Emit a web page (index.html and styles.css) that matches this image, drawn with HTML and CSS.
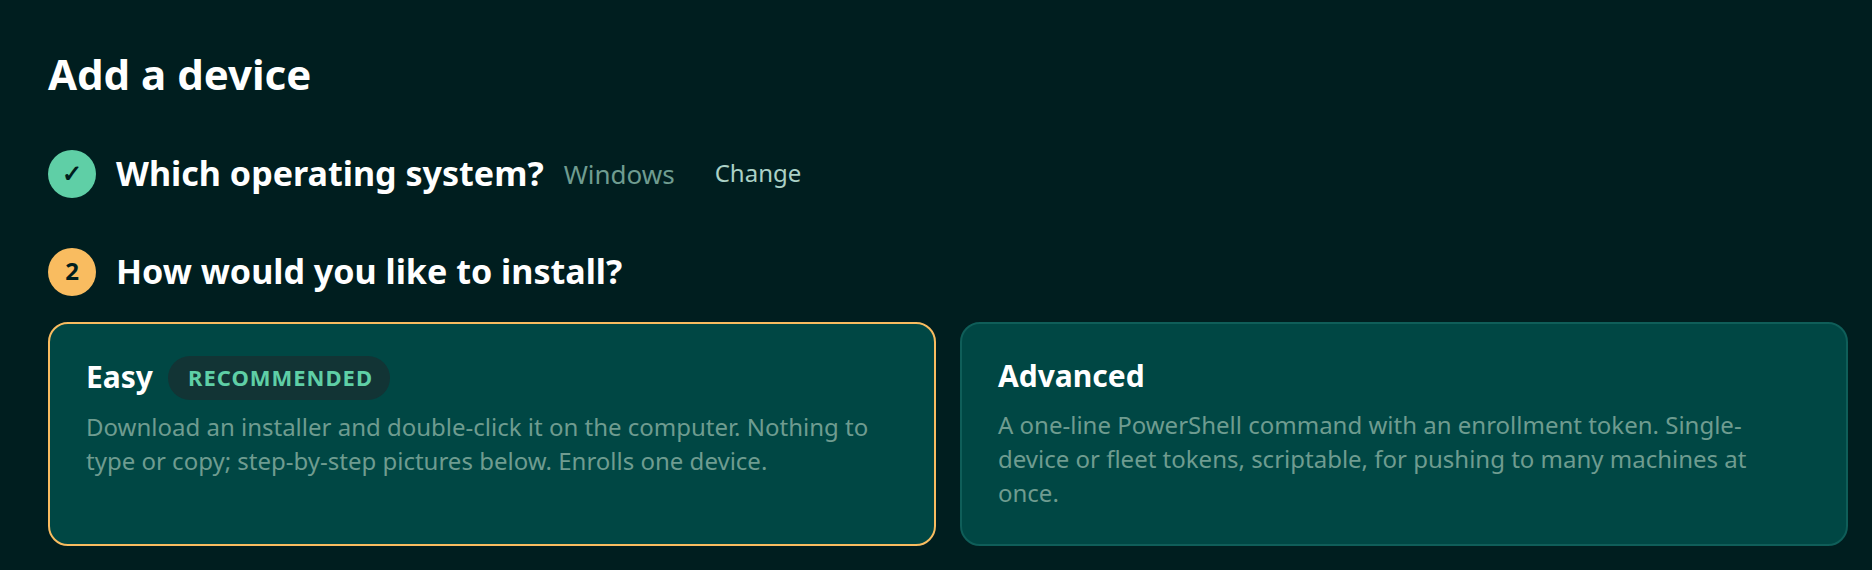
FILE: index.html
```html
<!DOCTYPE html>
<html lang="en">
<head>
    <meta charset="UTF-8">
    <title>Add a device</title>
    <link rel="stylesheet" href="styles.css">
</head>
<body>
    <main class="page">
        <h1 class="page-title">Add a device</h1>

        <!-- Step 1 -->
        <section class="step step-done">
            <div class="step-head">
                <span class="step-badge badge-done">✓</span>
                <h2 class="step-title">Which operating system?</h2>
                <span class="step-value">Windows</span>
                <button class="step-change">Change</button>
            </div>
        </section>

        <!-- Step 2 -->
        <section class="step">
            <div class="step-head">
                <span class="step-badge badge-current">2</span>
                <h2 class="step-title">How would you like to install?</h2>
            </div>
            <div class="choices">
                <div class="choice selected">
                    <div class="choice-head">
                        <span class="choice-name">Easy</span>
                        <span class="tag">RECOMMENDED</span>
                    </div>
                    <p class="choice-text">Download an installer and double-click it on the computer. Nothing to type or copy; step-by-step pictures below. Enrolls one device.</p>
                </div>
                <div class="choice">
                    <div class="choice-head">
                        <span class="choice-name">Advanced</span>
                    </div>
                    <p class="choice-text">A one-line PowerShell command with an enrollment token. Single-device or fleet tokens, scriptable, for pushing to many machines at once.</p>
                </div>
            </div>
        </section>
    </main>
</body>
</html>
```

FILE: styles.css
```css
* {
    margin: 0;
    padding: 0;
    box-sizing: border-box;
    font-family: "Noto Sans", sans-serif;
}

body {
    background-color: #001e1f;
    color: #fff;
    overflow: hidden;
}

.page {
    padding: 45px 24px 0 48px;
}

.page-title {
    font-size: 42px;
    font-weight: 700;
    line-height: 58px;
    margin-bottom: 47px;
}

.step {
    margin-bottom: 50px;
}

.step:last-child {
    margin-bottom: 0;
}

.step-head {
    display: flex;
    align-items: center;
    gap: 20px;
}

.step-badge {
    width: 48px;
    height: 48px;
    padding-bottom: 3px;
    border-radius: 50%;
    display: flex;
    justify-content: center;
    align-items: center;
    flex-shrink: 0;
    color: #001e1d;
    font-size: 24px;
    font-weight: 700;
}

.badge-done {
    background: #5fcfa6;
}

.badge-current {
    background: #f9bc60;
}

.step-title {
    font-size: 34.07px;
    font-weight: 700;
    line-height: 46px;
    padding-bottom: 2px;
}

.step-value {
    font-size: 26px;
    color: #6f9c90;
}

.step-change {
    background: none;
    border: none;
    color: #abd1c6;
    font-size: 24px;
    padding: 0 20px 3px;
}

.choices {
    display: grid;
    grid-template-columns: 1fr 1fr;
    gap: 24px;
    margin-top: 26px;
}

.choice {
    height: 224px;
    padding: 32px 36px;
    background: #004744;
    border: 2px solid #0f5e59;
    border-radius: 20px;
}

.choice.selected {
    border-color: #f9bc60;
}

.choice-head {
    display: flex;
    align-items: center;
    gap: 15px;
}

.choice-name {
    font-size: 30px;
    font-weight: 700;
    line-height: 39px;
    padding-bottom: 3px;
}

.tag {
    background: #123435;
    color: #5fcfa6;
    border-radius: 22px;
    padding: 0 16.6px 2px 20px;
    line-height: 42px;
    font-size: 22px;
    font-weight: 700;
    letter-spacing: 1px;
}

.choice-text {
    margin-top: 10px;
    font-size: 24px;
    line-height: 34px;
    color: #6f9c90;
}
```
